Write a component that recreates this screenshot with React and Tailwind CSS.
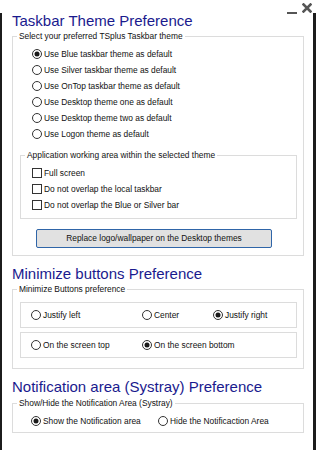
const themeOptions = [
  { label: "Use Blue taskbar theme as default", checked: true },
  { label: "Use Silver taskbar theme as default" },
  { label: "Use OnTop taskbar theme as default" },
  { label: "Use Desktop theme one as default" },
  { label: "Use Desktop theme two as default" },
  { label: "Use Logon theme as default" },
];

const areaOptions = [
  "Full screen",
  "Do not overlap the local taskbar",
  "Do not overlap the Blue or Silver bar",
];

const Radio = ({ checked, label, className = "" }) => (
  <div className={`flex items-center h-4 gap-[2px] ${className}`}>
    <svg width="10" height="10" viewBox="0 0 10 10" className="shrink-0">
      <circle cx="5" cy="5" r="4.5" fill="white" stroke="#333" strokeWidth="1" />
      {checked && <circle cx="5" cy="5" r="2.5" fill="#1a1a1a" />}
    </svg>
    <span>{label}</span>
  </div>
);

const Checkbox = ({ label }) => (
  <div className="flex items-center h-4 gap-[2px]">
    <span className="w-[10px] h-[10px] border border-[#333] bg-white shrink-0" />
    <span>{label}</span>
  </div>
);

const Title = ({ children, className = "" }) => (
  <h2 className={`pl-[10px] text-[15px] leading-[16px] text-[#1a1a8e] ${className}`}>
    {children}
  </h2>
);

const Legend = ({ children }) => (
  <legend className="ml-[4px] px-[2px] leading-[11px]">{children}</legend>
);

export default function App() {
  return (
    <div className="relative w-[316px] h-[450px] bg-white pt-[7px] font-['Liberation_Sans',Arial,sans-serif] text-[8.4px] text-[#111]">
      {/* window controls */}
      <div className="absolute top-[3px] right-[4px] flex items-end gap-[5px]">
        <span className="block w-[10px] h-[2px] bg-[#555] mb-[-1px]" />
        <svg width="10" height="10" viewBox="0 0 10 10">
          <path d="M1.5 1.5 L8.5 8.5 M8.5 1.5 L1.5 8.5" stroke="#555" strokeWidth="2.6" strokeLinecap="square" />
        </svg>
      </div>

      <div className="h-full border-l-2 border-r-[3px] border-b-[3px] border-[#1c1c1c]">
        <Title className="mt-[6px]">Taskbar Theme Preference</Title>

        <fieldset className="ml-[10px] mt-[1.5px] w-[292px] border border-[#dcdcdc] pt-[4.5px] pb-[7px]">
          <Legend>Select your preferred TSplus Taskbar theme</Legend>
          <div className="pl-[19px]">
            {themeOptions.map((o) => (
              <Radio key={o.label} label={o.label} checked={o.checked} />
            ))}
          </div>

          <fieldset className="ml-[7px] mt-[8px] w-[277px] border border-[#dcdcdc] pt-[4px] pb-[5px]">
            <Legend>Application working area within the selected theme</Legend>
            <div className="pl-[11px]">
              {areaOptions.map((o) => (
                <Checkbox key={o} label={o} />
              ))}
            </div>
          </fieldset>

          <button className="block ml-[23px] mt-[10px] w-[236px] h-[19px] bg-[#e1e1e1] border border-[#2f65a8] rounded-[2px] text-[8.4px] text-[#111] leading-none">
            Replace logo/wallpaper on the Desktop themes
          </button>
        </fieldset>

        <Title className="mt-[10px]">Minimize buttons Preference</Title>

        <fieldset className="ml-[10px] mt-[2px] w-[292px] border border-[#dcdcdc] pt-[7px] pb-[10px]">
          <Legend>Minimize Buttons preference</Legend>
          <div className="ml-[7px] w-[277px] h-[26px] border border-[#dcdcdc] pl-[10px] flex items-center">
            <Radio className="w-[111px]" label="Justify left" />
            <Radio className="w-[71px]" label="Center" />
            <Radio label="Justify right" checked />
          </div>
          <div className="ml-[7px] mt-[4px] w-[277px] h-[26px] border border-[#dcdcdc] pl-[10px] flex items-center">
            <Radio className="w-[111px]" label="On the screen top" />
            <Radio label="On the screen bottom" checked />
          </div>
        </fieldset>

        <Title className="mt-[10px]">Notification area (Systray) Preference</Title>

        <fieldset className="ml-[10px] mt-[3px] w-[292px] border border-[#dcdcdc] pt-[4px] pb-[3px]">
          <Legend>Show/Hide the Notification Area (Systray)</Legend>
          <div className="pl-[18px] flex items-center">
            <Radio className="w-[127px]" label="Show the Notification area" checked />
            <Radio label="Hide the Notificaction Area" />
          </div>
        </fieldset>
      </div>
    </div>
  );
}
